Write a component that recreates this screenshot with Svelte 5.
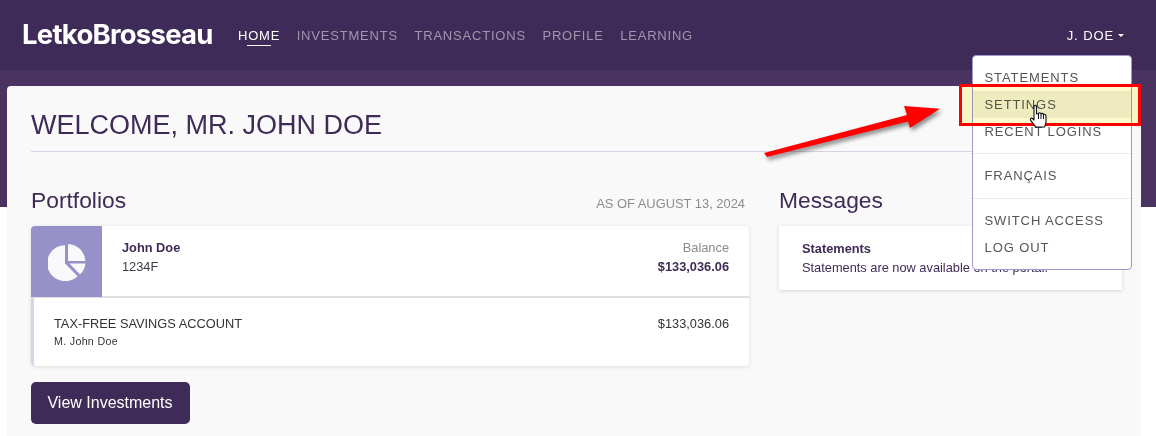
<script lang="ts">
  const links = ['Home', 'Investments', 'Transactions', 'Profile', 'Learning'];
  const menu = [
    ['Statements', 'Settings', 'Recent Logins'],
    ['Français'],
    ['Switch Access', 'Log Out']
  ];
</script>

<div class="page">
  <nav class="topbar">
    <span class="logo">LetkoBrosseau</span>
    <ul class="links">
      {#each links as link, i}
        <li class:active={i === 0}>{link}</li>
      {/each}
    </ul>
    <span class="user">J. Doe<i class="caret"></i></span>
  </nav>

  <main class="card">
    <h1>WELCOME, MR. JOHN DOE</h1>
    <div class="columns">
      <section class="portfolios">
        <header class="section-head">
          <h2>Portfolios</h2>
          <span class="asof">AS OF AUGUST 13, 2024</span>
        </header>
        <div class="panel">
          <div class="summary">
            <div class="tile">
              <svg width="38" height="38" viewBox="0 0 38 38" fill="#f9f9fb">
                <path d="M17 2.2V20.6L29.6 33.2A18 18 0 1 1 17 2.2Z" />
                <path d="M20 1V18H37.4A18 18 0 0 0 20 1Z" />
                <path d="M21.5 20.5H37.4A18 18 0 0 1 32 31.6Z" />
              </svg>
            </div>
            <div class="who">
              <strong>John Doe</strong>
              <span>1234F</span>
            </div>
            <div class="balance">
              <span>Balance</span>
              <strong>$133,036.06</strong>
            </div>
          </div>
          <div class="account">
            <div class="acct-name">
              <span>TAX-FREE SAVINGS ACCOUNT</span>
              <small>M. John Doe</small>
            </div>
            <span class="amount">$133,036.06</span>
          </div>
        </div>
        <button class="view" type="button">View Investments</button>
      </section>

      <section class="messages">
        <header class="section-head">
          <h2>Messages</h2>
        </header>
        <div class="message">
          <strong>Statements</strong>
          <p>Statements are now available on the portal.</p>
        </div>
      </section>
    </div>
  </main>

  <div class="dropdown">
    {#each menu as group, g}
      {#if g > 0}<hr />{/if}
      {#each group as item}
        <div class="item" class:hover={item === 'Settings'}>{item}</div>
      {/each}
    {/each}
  </div>

  <!-- annotations drawn over the screenshot -->
  <div class="callout"></div>
  <svg class="arrow" width="200" height="70" viewBox="0 0 200 70">
    <path d="M4 48L147 10L144 1L180 3.700L150 23L148 16.600L7 52Z" fill="#fe0000" />
  </svg>
  <svg class="hand" width="20" height="26" viewBox="0 0 20 26">
    <path
      d="M5 2.500C5 1 7.500 1 7.500 2.500V10L9.500 9.500C10 8.500 11.500 8.500 12 9.800C12.800 9 14.200 9.300 14.500 10.500C15.500 10 17 10.500 17 12V18C17 20 16 21 15.500 23H6.500C6 21 2 17.500 1.500 16C1 14.500 2.500 13.500 3.500 14.500L5 16Z"
      fill="#fff"
      stroke="#111"
      stroke-width="1.100"
      stroke-linejoin="round"
    />
    <path d="M9.500 10V15M12 10V15M14.500 11V15" stroke="#111" stroke-width="1" fill="none" />
  </svg>
</div>

<style>
  :global(body) {
    margin: 0;
    background: #fff;
    font-family: 'Liberation Sans', Arial, sans-serif;
  }
  .page {
    position: relative;
    width: 1156px;
    height: 436px;
    overflow: hidden;
    background: linear-gradient(#4a3360 207px, #fff 207px);
  }
  .topbar {
    display: flex;
    align-items: center;
    height: 70px;
    padding: 0 32px 0 22px;
    box-sizing: border-box;
    background: #3f2b57;
    color: #fff;
  }
  .logo {
    width: 216px;
    font-family: Inter, 'Liberation Sans', sans-serif;
    font-size: 27.5px;
    font-weight: 700;
    letter-spacing: -0.75px;
    position: relative;
    top: -1px;
  }
  .links {
    display: flex;
    gap: 16.500px;
    margin: 0;
    padding: 0;
    list-style: none;
    font-size: 13px;
    letter-spacing: 0.8px;
    text-transform: uppercase;
    color: #a196ae;
  }
  .links li {
    position: relative;
  }
  .links li.active {
    color: #fff;
  }
  .links li.active::after {
    content: '';
    position: absolute;
    left: 9px;
    right: 9px;
    bottom: -3px;
    height: 1px;
    background: #fff;
  }
  .user {
    margin-left: auto;
    font-size: 13px;
    letter-spacing: 0.9px;
    text-transform: uppercase;
  }
  .caret {
    display: inline-block;
    margin-left: 4px;
    vertical-align: 3px;
    border-top: 3.500px solid #fff;
    border-left: 3.500px solid transparent;
    border-right: 3.500px solid transparent;
  }
  .card {
    margin: 16px 15px 0 7px;
    height: 350px;
    padding: 0 19px 0 24px;
    box-sizing: border-box;
    background: #f9f9f9;
    border-radius: 4px 4px 0 0;
    color: #3f2b57;
  }
  h1 {
    margin: 0;
    height: 65px;
    line-height: 79px;
    font-size: 27px;
    font-weight: 400;
    border-bottom: 1px solid #d6d4e4;
  }
  .columns {
    display: flex;
    gap: 30px;
  }
  .portfolios {
    width: 718px;
  }
  .messages {
    width: 343px;
  }
  .section-head {
    display: flex;
    justify-content: space-between;
    align-items: center;
    height: 74px;
    padding-top: 22px;
    padding-right: 4px;
    box-sizing: border-box;
  }
  h2 {
    margin: 0;
    font-size: 22.8px;
    font-weight: 400;
  }
  .asof {
    position: relative;
    top: 3px;
    font-size: 12.900px;
    color: #8d8a91;
  }
  .panel {
    background: #fff;
    border-radius: 4px;
    box-shadow: 0 1px 4px rgba(0, 0, 0, 0.12);
  }
  .summary {
    display: flex;
    align-items: stretch;
    height: 72px;
    border-bottom: 2px solid #dfdfdf;
    box-sizing: border-box;
    font-size: 12.800px;
    line-height: 19px;
  }
  .tile {
    display: flex;
    align-items: center;
    justify-content: center;
    width: 71px;
    height: 71px;
    background: #9691c8;
    border-radius: 4px 0 0 0;
  }
  .who,
  .balance {
    display: flex;
    flex-direction: column;
    padding-top: 12px;
  }
  .who {
    margin-left: 20px;
    color: #3f2b57;
  }
  .who span {
    color: #3a3a4a;
  }
  .balance {
    margin-left: auto;
    padding-right: 20px;
    text-align: right;
    color: #8d8a91;
  }
  .balance strong {
    color: #3f2b57;
  }
  .account {
    display: flex;
    justify-content: space-between;
    height: 68px;
    padding: 18px 20px 0 20px;
    box-sizing: border-box;
    border-left: 3px solid #d6d6e6;
    border-radius: 0 0 4px 4px;
    font-size: 12.800px;
    color: #333;
  }
  .acct-name {
    display: flex;
    flex-direction: column;
    gap: 4px;
  }
  .acct-name small {
    font-size: 10.700px;
    letter-spacing: 0.300px;
  }
  .view {
    display: block;
    width: 159px;
    height: 42px;
    margin-top: 16px;
    padding: 0 1px 0 0;
    border: 0;
    border-radius: 5px;
    background: #3f2b57;
    color: #fff;
    font: 16px 'Liberation Sans', Arial, sans-serif;
  }
  .message {
    height: 64px;
    padding: 13px 23px 0;
    box-sizing: border-box;
    background: #fff;
    box-shadow: 0 1px 4px rgba(0, 0, 0, 0.14);
    font-size: 12.800px;
    line-height: 19px;
    color: #3f2b57;
  }
  .message p {
    margin: 0;
  }
  .dropdown {
    position: absolute;
    left: 972px;
    top: 55px;
    width: 160px;
    height: 215px;
    box-sizing: border-box;
    padding: 8px 0;
    background: #fff;
    border: 1px solid #9c97cc;
    border-radius: 4px;
  }
  .item {
    height: 27px;
    padding-left: 11.500px;
    line-height: 27px;
    font-size: 13px;
    letter-spacing: 0.9px;
    text-transform: uppercase;
    color: #555;
  }
  .item.hover {
    background: #f0f0f0;
  }
  hr {
    margin: 8px 0;
    border: 0;
    border-top: 1px solid #e9e9ec;
  }
  hr:last-of-type {
    margin-top: 9px;
  }
  .callout {
    position: absolute;
    left: 959px;
    top: 84px;
    width: 182px;
    height: 42px;
    box-sizing: border-box;
    border: 3px solid #fe0000;
  }
  .callout::before {
    content: '';
    position: absolute;
    inset: 0;
    background: #fdfbcb;
    mix-blend-mode: multiply;
  }
  .arrow {
    position: absolute;
    left: 760px;
    top: 105px;
    filter: drop-shadow(2px 3px 2px rgba(0, 0, 0, 0.45));
  }
  .hand {
    position: absolute;
    left: 1029px;
    top: 104px;
  }
</style>
